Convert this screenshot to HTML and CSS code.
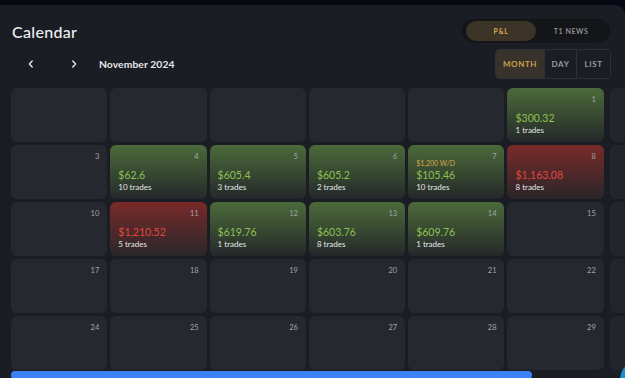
FILE: index.html
```html
<!DOCTYPE html>
<html>
<head>
<meta charset="utf-8">
<link rel="stylesheet" href="styles.css">
</head>
<body>
<div class="panel">
  <div class="row-top">
    <h1 class="title">Calendar</h1>
    <div class="pill">
      <span class="pill-seg active">P&amp;L</span>
      <span class="pill-seg">T1 NEWS</span>
    </div>
  </div>
  <div class="row-nav">
    <div class="nav">
      <button class="chev"><svg width="10" height="10" viewBox="0 0 10 10"><path d="M6.2 2 L3.4 5 L6.2 8" fill="none" stroke="#e6e7eb" stroke-width="1.4" stroke-linecap="round" stroke-linejoin="round"/></svg></button>
      <button class="chev"><svg width="10" height="10" viewBox="0 0 10 10"><path d="M3.8 2 L6.6 5 L3.8 8" fill="none" stroke="#e6e7eb" stroke-width="1.4" stroke-linecap="round" stroke-linejoin="round"/></svg></button>
      <span class="month">November 2024</span>
    </div>
    <div class="views">
      <span class="view active">MONTH</span>
      <span class="view">DAY</span>
      <span class="view">LIST</span>
    </div>
  </div>
  <div class="scroll">
    <div class="grid">
      <div class="cell"></div>
      <div class="cell"></div>
      <div class="cell"></div>
      <div class="cell"></div>
      <div class="cell"></div>
      <div class="cell green"><span class="day">1</span><span class="amt">$300.32</span><span class="tr">1 trades</span></div>
      <div class="cell sat"></div>

      <div class="cell"><span class="day">3</span></div>
      <div class="cell green"><span class="day">4</span><span class="amt">$62.6</span><span class="tr">10 trades</span></div>
      <div class="cell green"><span class="day">5</span><span class="amt">$605.4</span><span class="tr">3 trades</span></div>
      <div class="cell green"><span class="day">6</span><span class="amt">$605.2</span><span class="tr">2 trades</span></div>
      <div class="cell green"><span class="day">7</span><span class="wd">$1,200 W/D</span><span class="amt">$105.46</span><span class="tr">10 trades</span></div>
      <div class="cell red"><span class="day">8</span><span class="amt">$1,163.08</span><span class="tr">8 trades</span></div>
      <div class="cell sat"></div>

      <div class="cell"><span class="day">10</span></div>
      <div class="cell red"><span class="day">11</span><span class="amt">$1,210.52</span><span class="tr">5 trades</span></div>
      <div class="cell green"><span class="day">12</span><span class="amt">$619.76</span><span class="tr">1 trades</span></div>
      <div class="cell green"><span class="day">13</span><span class="amt">$603.76</span><span class="tr">8 trades</span></div>
      <div class="cell green"><span class="day">14</span><span class="amt">$609.76</span><span class="tr">1 trades</span></div>
      <div class="cell"><span class="day">15</span></div>
      <div class="cell sat"></div>

      <div class="cell"><span class="day">17</span></div>
      <div class="cell"><span class="day">18</span></div>
      <div class="cell"><span class="day">19</span></div>
      <div class="cell"><span class="day">20</span></div>
      <div class="cell"><span class="day">21</span></div>
      <div class="cell"><span class="day">22</span></div>
      <div class="cell sat"></div>

      <div class="cell"><span class="day">24</span></div>
      <div class="cell"><span class="day">25</span></div>
      <div class="cell"><span class="day">26</span></div>
      <div class="cell"><span class="day">27</span></div>
      <div class="cell"><span class="day">28</span></div>
      <div class="cell"><span class="day">29</span></div>
      <div class="cell sat"></div>
    </div>
    <div class="track"><div class="thumb"></div></div>
  </div>
</div>
<div class="chat"></div>
</body>
</html>
```

FILE: styles.css
```css
* { box-sizing: border-box; }
html, body { margin: 0; padding: 0; }
body {
  background: #060912;
  font-family: "Lato", "Noto Sans", sans-serif;
  width: 625px;
  height: 378px;
  overflow: hidden;
}
.panel {
  margin-top: 5px;
  height: 373px;
  background: #1b1d24;
  border-radius: 0 10px 0 0;
  padding: 14px 15px 0 0;
  overflow: hidden;
}
.row-top {
  display: flex;
  align-items: center;
  justify-content: space-between;
  height: 24px;
}
.title {
  margin: 0 0 0 12px;
  font-size: 16px;
  font-weight: 500;
  color: #eeeff2;
  letter-spacing: 0.3px;
}
.pill {
  display: flex;
  align-items: center;
  width: 148px;
  height: 24px;
  padding: 3px 4px;
  background: #141519;
  border-radius: 12px;
}
.pill-seg {
  flex: 1;
  height: 20px;
  line-height: 20px;
  text-align: center;
  font-size: 7px;
  font-weight: 700;
  letter-spacing: 0.6px;
  color: #8c8e95;
  border-radius: 10px;
}
.pill-seg.active {
  background: #3b3427;
  color: #d6a94b;
}
.row-nav {
  display: flex;
  align-items: center;
  justify-content: space-between;
  margin-top: 6px;
  height: 30px;
}
.nav {
  display: flex;
  align-items: center;
  padding-left: 21px;
}
.chev {
  width: 20px;
  height: 20px;
  padding: 0;
  border: 0;
  background: transparent;
  display: flex;
  align-items: center;
  justify-content: center;
}
.chev + .chev { margin-left: 23px; }
.month {
  margin-left: 15px;
  font-size: 10.3px;
  font-weight: 700;
  color: #e6e7eb;
  letter-spacing: 0.1px;
}
.views {
  display: flex;
  height: 30px;
  border: 1px solid #2d2f37;
  border-radius: 4px;
  overflow: hidden;
  margin-right: -1px;
}
.view {
  display: flex;
  align-items: center;
  justify-content: center;
  font-size: 8px;
  font-weight: 700;
  letter-spacing: 0.6px;
  color: #9a9ca3;
  width: 32px;
}
.view.active {
  width: 48px;
  background: #38332a;
  color: #caa24b;
}
.view + .view { border-left: 1px solid #2d2f37; }
.view:last-child { width: 34px; }
.scroll {
  margin-top: 9px;
  padding-left: 11px;
  width: 640px;
}
.grid {
  display: grid;
  grid-template-columns: repeat(6, 96.3px) 96px;
  grid-auto-rows: 54px;
  gap: 3px;
}
.cell {
  position: relative;
  background: #262830;
  border-radius: 6px;
  display: flex;
  flex-direction: column;
  justify-content: flex-end;
  padding: 0 8px 6px 8px;
}
.cell.sat { margin-left: 3px; background: #23252c; }
.cell.green { background: linear-gradient(180deg, #4b6a3a 0%, #3a4d32 45%, #25282b 100%); }
.cell.red { background: linear-gradient(180deg, #7a2a28 0%, #55292a 45%, #29262a 100%); }
.day {
  position: absolute;
  top: 7px;
  right: 8px;
  font-size: 7.5px;
  color: #a3a5ab;
}
.amt {
  font-size: 10.5px;
  line-height: 13px;
  color: #8dc150;
}
.red .amt { color: #e5463c; }
.wd {
  font-size: 7px;
  line-height: 9px;
  color: #d6a94b;
  margin-bottom: 1px;
}
.tr {
  font-size: 8px;
  line-height: 11px;
  color: #e4e5e8;
}
.track {
  margin-top: 1px;
  height: 8px;
}
.thumb {
  width: 521px;
  height: 8px;
  background: #3b82f6;
  border-radius: 4px;
}
.chat {
  position: fixed;
  right: -35px;
  bottom: -22px;
  width: 40px;
  height: 40px;
  border-radius: 50%;
  background: #1a8fd0;
}
```
